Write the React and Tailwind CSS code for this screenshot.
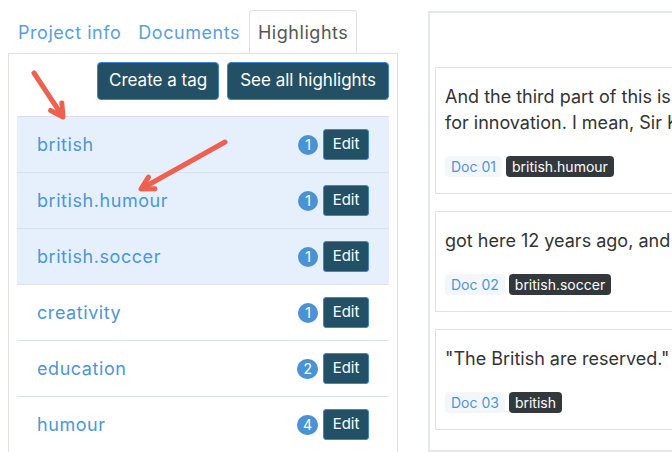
import React from "react";

const TAGS = [
  { name: "british", count: 1, active: true },
  { name: "british.humour", count: 1, active: true },
  { name: "british.soccer", count: 1, active: true },
  { name: "creativity", count: 1 },
  { name: "education", count: 2 },
  { name: "humour", count: 4 },
];

const HIGHLIGHTS = [
  {
    lines: ["And the third part of this is that we've all agreed", "for innovation. I mean, Sir Ken Robinson"],
    doc: "Doc 01",
    tag: "british.humour",
  },
  { lines: ["got here 12 years ago, and"], doc: "Doc 02", tag: "british.soccer" },
  { lines: ['"The British are reserved."'], doc: "Doc 03", tag: "british" },
];

const Arrow = ({ x1, y1, x2, y2 }) => {
  const a = Math.atan2(y2 - y1, x2 - x1);
  const len = 14;
  const w = 0.5;
  const p1 = [x2 - len * Math.cos(a - w), y2 - len * Math.sin(a - w)];
  const p2 = [x2 - len * Math.cos(a + w), y2 - len * Math.sin(a + w)];
  return (
    <g stroke="#ee6150" strokeWidth="5" strokeLinecap="round" strokeLinejoin="round" fill="none">
      <line x1={x1} y1={y1} x2={x2 - 4 * Math.cos(a)} y2={y2 - 4 * Math.sin(a)} />
      <polyline points={`${p1[0]},${p1[1]} ${x2},${y2} ${p2[0]},${p2[1]}`} />
    </g>
  );
};

export default function App() {
  return (
    <div
      className="relative w-[672px] h-[452px] overflow-hidden bg-white flex gap-[30px] pl-2 pt-[10px]"
      style={{ fontFamily: "Inter, 'DejaVu Sans', sans-serif" }}
    >
      <div className="w-[390px] shrink-0 flex flex-col tracking-[0.035em]">
        <div className="flex items-end h-[43px] text-[18px] tracking-[0.03em]">
          <div className="pl-[10px] pr-[8px] h-[42px] flex items-center text-[#5a9fd9]">Project info</div>
          <div className="px-[9px] h-[42px] flex items-center text-[#5a9fd9]">Documents</div>
          <div className="px-[8px] h-[44px] -mb-px flex items-center text-[#555] bg-white border border-[#dee2e6] border-b-white rounded-t-[4px]">
            Highlights
          </div>
        </div>
        <div className="flex-1 border border-[#dee2e6] px-2 pt-[8px]">
          <div className="flex justify-end gap-2 text-[17px] text-white tracking-normal">
            <button className="h-[38px] px-[11px] bg-[#235064] border border-[#3d85d6] rounded-[4px]">Create a tag</button>
            <button className="h-[38px] px-3 bg-[#235064] border border-[#3d85d6] rounded-[4px]">See all highlights</button>
          </div>
          <div className="mt-4 border-t border-[#d8dfe7]">
            {TAGS.map((t) => (
              <div
                key={t.name}
                className={`h-[56px] flex items-center justify-between pl-5 pr-[20px] border-b border-[#dde2e7] ${
                  t.active ? "bg-[#e6f0fc]" : "bg-white"
                }`}
              >
                <span className="text-[18px] text-[#4e95d8]">{t.name}</span>
                <div className="flex items-center gap-[5px] tracking-normal">
                  <span className="min-w-[20px] h-[20px] px-[6px] rounded-full bg-[#4a92d3] text-white text-[14px] flex items-center justify-center">
                    {t.count}
                  </span>
                  <button className="h-[31px] w-[46px] bg-[#235064] border border-[#3d85d6] rounded-[3px] text-white text-[15px]">
                    Edit
                  </button>
                </div>
              </div>
            ))}
          </div>
        </div>
      </div>
      <div className="flex-1 mt-px border-2 border-r-0 border-[#e4e7eb] pl-[5px] pt-[54px] flex flex-col gap-[17px]">
        {HIGHLIGHTS.map((h) => (
          <div key={h.doc} className="border border-r-0 border-[#e0e3e6] pl-[9px] pt-[16px] pb-[16px] whitespace-nowrap overflow-hidden">
            <div className="text-[18px] leading-[26px] text-[#333]">
              {h.lines.map((l) => (
                <div key={l}>{l}</div>
              ))}
            </div>
            <div className="mt-[20px] flex items-center gap-[4px] text-[14px]">
              <span className="px-[6px] h-[21px] flex items-center rounded-[4px] bg-[#f4f7fa] text-[#4e95d8]">{h.doc}</span>
              <span className="px-[6px] h-[21px] flex items-center rounded-[4px] bg-[#33383d] text-white">{h.tag}</span>
            </div>
          </div>
        ))}
      </div>
      <svg className="absolute left-0 top-0 pointer-events-none" width="672" height="452">
        <Arrow x1={34} y1={73} x2={63} y2={117} />
        <Arrow x1={225} y1={142} x2={141} y2={189} />
      </svg>
    </div>
  );
}
